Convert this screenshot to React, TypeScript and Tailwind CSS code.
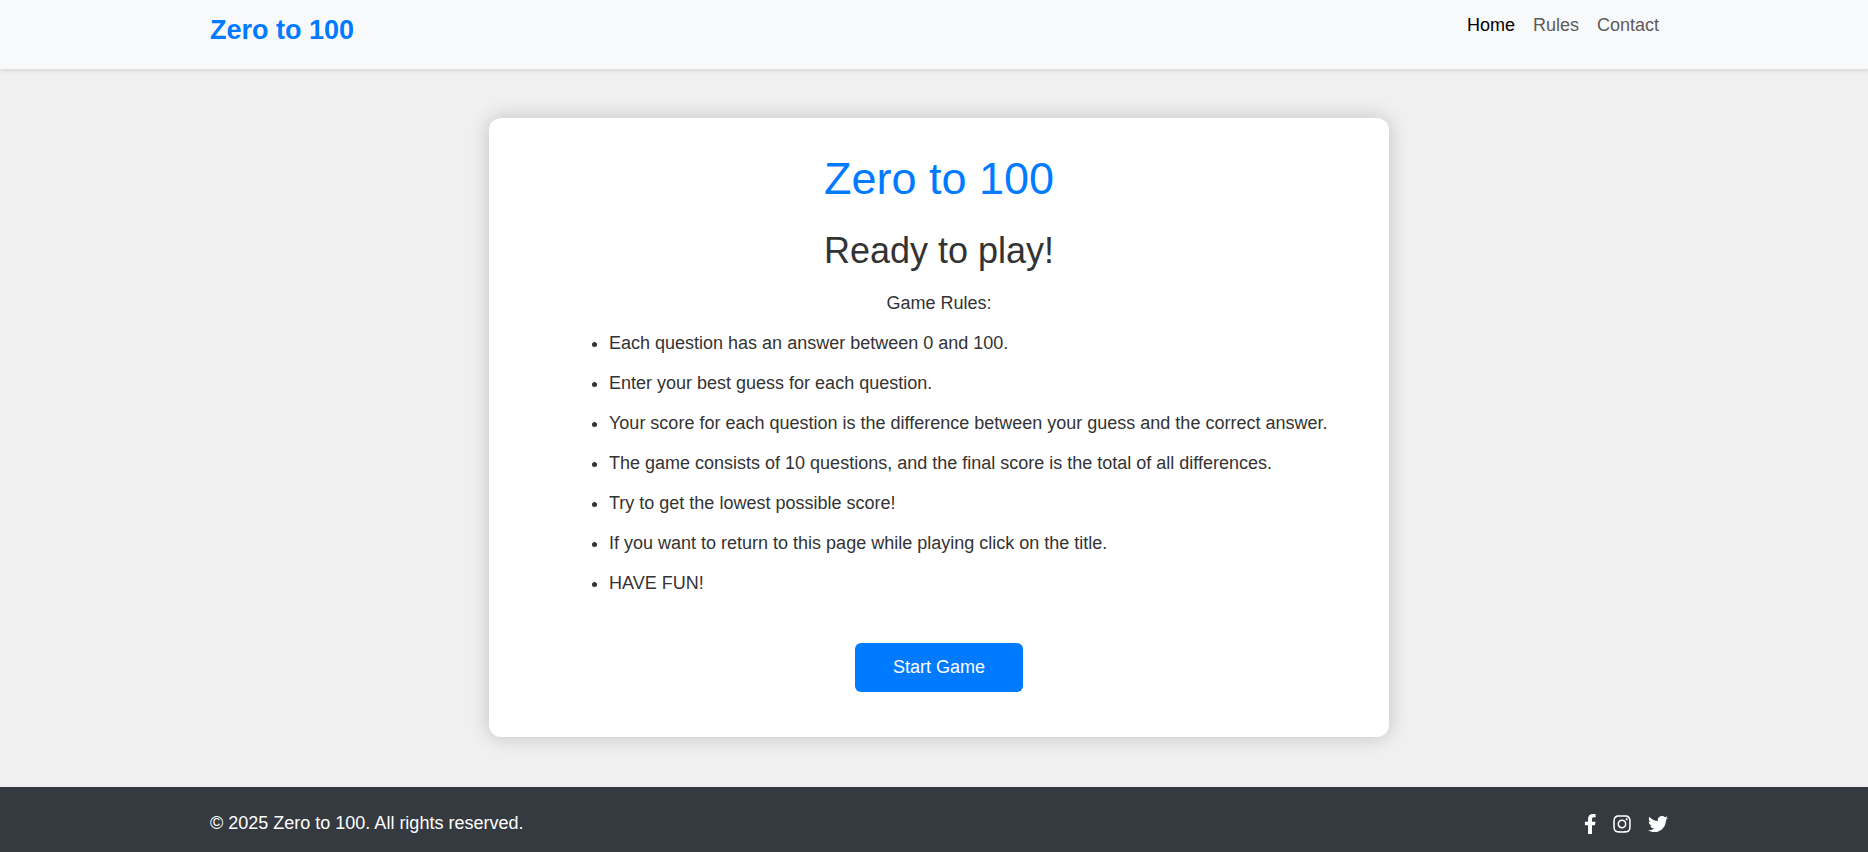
import type { SVGProps } from "react";
import { FaInstagram, FaTwitter } from "react-icons/fa";

const rules = [
  "Each question has an answer between 0 and 100.",
  "Enter your best guess for each question.",
  "Your score for each question is the difference between your guess and the correct answer.",
  "The game consists of 10 questions, and the final score is the total of all differences.",
  "Try to get the lowest possible score!",
  "If you want to return to this page while playing click on the title.",
  "HAVE FUN!",
];

const links = ["Home", "Rules", "Contact"];

function FacebookIcon(props: SVGProps<SVGSVGElement>) {
  return (
    <svg viewBox="0 0 320 512" fill="currentColor" {...props}>
      <path d="M279.14 288l14.22-92.66h-88.91v-60.13c0-25.35 12.42-50.06 52.24-50.06h40.42V6.26S260.43 0 225.36 0c-73.22 0-121.08 44.38-121.08 124.72v70.62H22.89V288h81.39v224h100.17V288z" />
    </svg>
  );
}

const socials = [
  { name: "Facebook", Icon: FacebookIcon },
  { name: "Instagram", Icon: FaInstagram },
  { name: "Twitter", Icon: FaTwitter },
];

export default function App() {
  return (
    <div className="flex min-h-screen flex-col bg-[#f0f0f0] font-['Liberation_Sans',Arial,sans-serif] text-lg leading-[27px] text-[#333333]">
      <header className="relative bg-[#f8f9fa] pt-3 pr-3 pb-[21px] pl-[22px] shadow-[0_2px_4px_rgba(0,0,0,0.1)]">
        <nav className="mx-auto flex max-w-[1490px] items-start justify-between px-4">
          <a href="#home" className="text-[27px] leading-9 font-bold text-[#007bff]">
            Zero to 100
          </a>
          <ul className="flex">
            {links.map((link) => (
              <li key={link}>
                <a
                  href={"#" + link.toLowerCase()}
                  className={link === "Home" ? "px-[9px] text-black" : "px-[9px] text-[#5b5c5d]"}
                >
                  {link}
                </a>
              </li>
            ))}
          </ul>
        </nav>
      </header>

      <main className="flex flex-1 items-center justify-center pt-12 pr-3 pb-[50px] pl-[22px]">
        <section className="w-full max-w-[900px] rounded-xl bg-white px-9 pt-[34px] pb-[45px] text-center shadow-[0_0_20px_rgba(0,0,0,0.2)]">
          <h1 className="mb-[23px] text-[45px] leading-[54px] text-[#007bff]">Zero to 100</h1>
          <h2 className="mb-[18px] text-4xl leading-[43px]">Ready to play!</h2>
          <p className="mb-[13px]">Game Rules:</p>
          <ul className="mb-[46px] flex list-disc flex-col gap-[13px] pl-21 text-left">
            {rules.map((rule) => (
              <li key={rule}>{rule}</li>
            ))}
          </ul>
          <button type="button" className="mx-auto block rounded-md bg-[#007bff] px-[38px] py-[11px] text-white">
            Start Game
          </button>
        </section>
      </main>

      <footer className="bg-[#343a40] pt-[23px] pr-3 pb-[15px] pl-[22px] text-white">
        <div className="mx-auto flex max-w-[1490px] items-center justify-between px-4">
          <p>© 2025 Zero to 100. All rights reserved.</p>
          <div className="flex items-center gap-4">
            {socials.map(({ name, Icon }) => (
              <a key={name} href={"#" + name.toLowerCase()} aria-label={name}>
                <Icon className="h-5 w-auto" />
              </a>
            ))}
          </div>
        </div>
      </footer>
    </div>
  );
}
